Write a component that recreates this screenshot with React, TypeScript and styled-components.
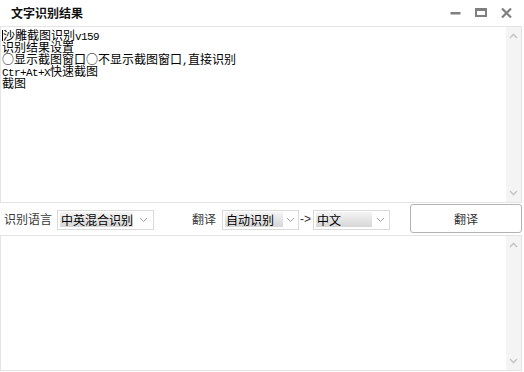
import React from "react";
import styled, { createGlobalStyle } from "styled-components";

const Global = createGlobalStyle`
  html, body { margin: 0; padding: 0; background: #fff; }
  * { box-sizing: border-box; }
`;

const Window = styled.div`
  width: 524px;
  height: 372px;
  display: flex;
  flex-direction: column;
  background: #fff;
  overflow: hidden;
  font-family: "Noto Sans CJK SC", "Noto Sans", sans-serif;
`;

const TitleBar = styled.div`
  height: 26px;
  display: flex;
  align-items: center;
  padding-left: 11px;
`;

const Title = styled.div`
  flex: 1;
  font-size: 12px;
  font-weight: 700;
  color: #111;
  line-height: 14px;
`;

const WinButtons = styled.div`
  display: flex;
  align-items: center;
  gap: 14px;
  padding-right: 12px;
  color: #7f7f7f;
`;

const Pane = styled.div<{ $h?: number }>`
  display: flex;
  margin-right: 2px;
  border: 1px solid #e4e4e4;
  ${(p) => (p.$h ? `height: ${p.$h}px;` : `flex: 1; margin-bottom: 1px;`)}
`;

const PaneText = styled.div`
  flex: 1;
  padding: 2px 0 0 1px;
  font-family: "Noto Sans CJK SC", sans-serif;
  font-size: 12px;
  line-height: 12px;
  color: #000;
  white-space: pre;
`;

const Line = styled.div`
  height: 12px;
  line-height: 12px;
`;

const Caret = styled.span`
  display: inline-block;
  width: 1px;
  height: 11px;
  background: #000;
  vertical-align: -1px;
`;

const Half = styled.span`
  font-family: "Liberation Mono", monospace;
  font-size: 11px;
  letter-spacing: -0.6px;
`;

const Scrollbar = styled.div`
  width: 15px;
  background: #f4f4f4;
  display: flex;
  flex-direction: column;
  justify-content: space-between;
  align-items: center;
  padding: 6px 0;
`;

const ControlRow = styled.div`
  height: 32px;
  display: flex;
  align-items: center;
`;

const Label = styled.span<{ $ml: number }>`
  margin-left: ${(p) => p.$ml}px;
  font-size: 12px;
  color: #3a3a3a;
  line-height: 14px;
`;

const Select = styled.div<{ $w: number; $ml: number }>`
  width: ${(p) => p.$w}px;
  margin-left: ${(p) => p.$ml}px;
  height: 20px;
  border: 1px solid #dadada;
  display: flex;
  align-items: center;
  padding: 0 0 0 2px;
  margin-top: 1px;
`;

const Highlight = styled.div<{ $w: number }>`
  width: ${(p) => p.$w}px;
  height: 15px;
  background: linear-gradient(#f4f4f4, #d6d6d6);
  font-size: 12px;
  line-height: 15px;
  color: #000;
  padding-left: 1px;
`;

const Chevron = styled.div`
  flex: 1;
  display: flex;
  justify-content: center;
  align-items: center;
`;

const Arrow = styled.span`
  font-family: "Liberation Sans", sans-serif;
  font-size: 12px;
  color: #333;
  margin-left: 1px;
  line-height: 14px;
`;

const Button = styled.button`
  margin-left: 20px;
  width: 112px;
  height: 29px;
  border: 1px solid #b3b3b3;
  border-radius: 3px;
  background: #fff;
  font-family: "Noto Sans CJK SC", sans-serif;
  font-size: 12px;
  color: #333;
  padding: 0;
  margin-top: -2px;
`;

const Down = () => (
  <svg width="9" height="6" viewBox="0 0 9 6">
    <path d="M1 1 L4.5 4.5 L8 1" fill="none" stroke="#a0a0a0" strokeWidth="1" />
  </svg>
);

const ScrollArrow = ({ up }: { up?: boolean }) => (
  <svg width="9" height="6" viewBox="0 0 9 6">
    <path
      d={up ? "M1 5 L4.5 1.5 L8 5" : "M1 1 L4.5 4.5 L8 1"}
      fill="none"
      stroke="#c8c8c8"
      strokeWidth="1.6"
    />
  </svg>
);

export default function App() {
  return (
    <Window>
      <Global />
      <TitleBar>
        <Title>文字识别结果</Title>
        <WinButtons>
          <svg width="11" height="10" viewBox="0 0 11 10">
            <rect x="0.5" y="4" width="10" height="2.5" fill="currentColor" />
          </svg>
          <svg width="12" height="10" viewBox="0 0 12 10">
            <path d="M0 0 H12 V9 H0 Z M2 3 V7 H10 V3 Z" fill="currentColor" fillRule="evenodd" />
          </svg>
          <svg width="11" height="10" viewBox="0 0 11 10">
            <path d="M1 0.5 L10 9.5 M10 0.5 L1 9.5" stroke="currentColor" strokeWidth="2.2" />
          </svg>
        </WinButtons>
      </TitleBar>
      <Pane $h={177}>
        <PaneText>
          <Line>
            <Caret />沙雕截图识别<Half>v159</Half>
          </Line>
          <Line>识别结果设置</Line>
          <Line>
            ○显示截图窗口○不显示截图窗口<Half>,</Half>直接识别
          </Line>
          <Line>
            <Half>Ctr+At+X</Half>快速截图
          </Line>
          <Line>截图</Line>
        </PaneText>
        <Scrollbar>
          <ScrollArrow up />
          <ScrollArrow />
        </Scrollbar>
      </Pane>
      <ControlRow>
        <Label $ml={4}>识别语言</Label>
        <Select $w={97} $ml={5}>
          <Highlight $w={73}>中英混合识别</Highlight>
          <Chevron>
            <Down />
          </Chevron>
        </Select>
        <Label $ml={38}>翻译</Label>
        <Select $w={77} $ml={6}>
          <Highlight $w={58}>自动识别</Highlight>
          <Chevron>
            <Down />
          </Chevron>
        </Select>
        <Arrow>-&gt;</Arrow>
        <Select $w={77} $ml={2}>
          <Highlight $w={56}>中文</Highlight>
          <Chevron>
            <Down />
          </Chevron>
        </Select>
        <Button>翻译</Button>
      </ControlRow>
      <Pane>
        <PaneText />
        <Scrollbar>
          <ScrollArrow up />
          <ScrollArrow />
        </Scrollbar>
      </Pane>
    </Window>
  );
}
